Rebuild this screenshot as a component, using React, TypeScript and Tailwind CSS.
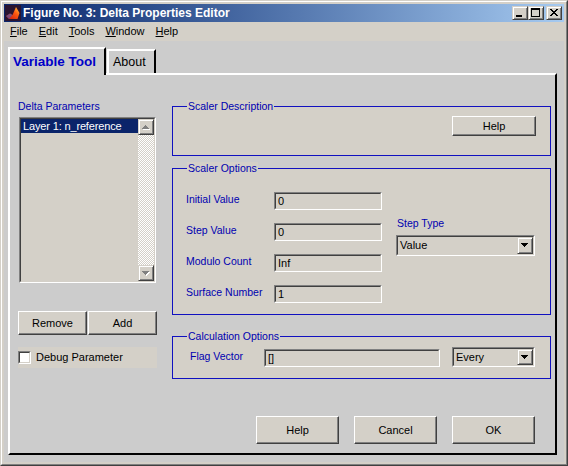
import React from "react";

function UpArrow({ disabled = true }: { disabled?: boolean }) {
  return (
    <svg width="8" height="5" viewBox="0 0 8 5" shapeRendering="crispEdges">
      {disabled && (
        <path d="M4 1h1v1h-1z M3 2h3v1h-3z M2 3h5v1h-5z M1 4h7v1h-7z" fill="#ffffff" />
      )}
      <path d="M3 0h1v1h-1z M2 1h3v1h-3z M1 2h5v1h-5z M0 3h7v1h-7z" fill={disabled ? "#808080" : "#000000"} />
    </svg>
  );
}

function DownArrow({ disabled = false }: { disabled?: boolean }) {
  return (
    <svg width="8" height="5" viewBox="0 0 8 5" shapeRendering="crispEdges">
      {disabled && (
        <path d="M1 1h7v1h-7z M2 2h5v1h-5z M3 3h3v1h-3z M4 4h1v1h-1z" fill="#ffffff" />
      )}
      <path d="M0 0h7v1h-7z M1 1h5v1h-5z M2 2h3v1h-3z M3 3h1v1h-1z" fill={disabled ? "#808080" : "#000000"} />
    </svg>
  );
}

function SmallRaised({ className, children }: { className: string; children?: React.ReactNode }) {
  return (
    <div
      className={`flex items-center justify-center border border-t-[#d4d0c8] border-l-[#d4d0c8] border-r-[#404040] border-b-[#404040] bg-[#d4d0c8] shadow-[inset_1px_1px_#ffffff,inset_-1px_-1px_#808080] ${className}`}
    >
      {children}
    </div>
  );
}

function Btn({ label, className }: { label: string; className: string }) {
  return (
    <div
      className={`flex items-center justify-center border border-t-white border-l-white border-r-[#404040] border-b-[#404040] bg-[#d4d0c8] shadow-[inset_-1px_-1px_#808080] text-[11px] leading-none text-black ${className}`}
    >
      {label}
    </div>
  );
}

function Field({ value, className }: { value: string; className: string }) {
  return (
    <div className={`border border-t-[#808080] border-l-[#808080] border-r-white border-b-white ${className}`}>
      <div className="h-full flex items-center border border-t-[#404040] border-l-[#404040] border-r-[#d4d0c8] border-b-[#d4d0c8] bg-[#d4d0c8] pl-[2px] text-[11px] leading-none text-black">
        {value}
      </div>
    </div>
  );
}

function Dropdown({ value, className }: { value: string; className: string }) {
  return (
    <div className={`border border-t-[#808080] border-l-[#808080] border-r-white border-b-white ${className}`}>
      <div className="h-full flex items-stretch border border-t-[#404040] border-l-[#404040] border-r-[#d4d0c8] border-b-[#d4d0c8] bg-[#d4d0c8]">
        <span className="flex-1 flex items-center pl-[2px] text-[11px] leading-none text-black">{value}</span>
        <SmallRaised className="w-[16px]">
          <DownArrow />
        </SmallRaised>
      </div>
    </div>
  );
}

function Frame({ title, className, children }: { title: string; className: string; children?: React.ReactNode }) {
  return (
    <div className={`relative border border-[#1010c0] bg-[#d4d0c8] ${className}`}>
      <span className="absolute left-[14px] top-[-7px] bg-[#d4d0c8] px-[1px] text-[10.5px] leading-[13px] text-[#0000b0] whitespace-nowrap">
        {title}
      </span>
      {children}
    </div>
  );
}

function Label({ text, className = "" }: { text: string; className?: string }) {
  return (
    <span className={`text-[10.5px] leading-[13px] text-[#0000b0] whitespace-nowrap ${className}`}>{text}</span>
  );
}

function TitleBtn({ kind, className = "" }: { kind: "min" | "max" | "close"; className?: string }) {
  return (
    <div
      className={`w-[16px] h-[14px] flex items-center justify-center border border-t-[#d4d0c8] border-l-[#d4d0c8] border-r-[#404040] border-b-[#404040] bg-[#d4d0c8] shadow-[inset_1px_1px_#ffffff,inset_-1px_-1px_#808080] ${className}`}
    >
      <svg width="14" height="12" viewBox="0 0 14 12" shapeRendering="crispEdges">
        {kind === "min" && <rect x="3" y="8" width="6" height="2" fill="#000" />}
        {kind === "max" && (
          <path d="M2 1h9v9h-9z M3 3v6h7v-6z" fill="#000" fillRule="evenodd" />
        )}
        {kind === "close" && (
          <path
            d="M3 2h2v1h1v1h2v-1h1v-1h2v1h-1v1h-1v1h-1v1h1v1h1v1h1v1h-2v-1h-1v-1h-2v1h-1v1h-2v-1h1v-1h1v-1h1v-1h-1v-1h-1v-1h-1z"
            fill="#000"
          />
        )}
      </svg>
    </div>
  );
}

function MatlabIcon() {
  return (
    <svg width="16" height="16" viewBox="0 0 16 16">
      <defs>
        <linearGradient id="mg" x1="0" y1="1" x2="1" y2="0">
          <stop offset="0" stopColor="#c01010" />
          <stop offset="0.6" stopColor="#ff5a10" />
          <stop offset="1" stopColor="#ffd040" />
        </linearGradient>
      </defs>
      <rect width="16" height="16" fill="#2a1430" />
      <path d="M1 11 L5 8.5 L7.5 10 L11 2 L14.5 8 L12.5 14 L4 14 Z" fill="url(#mg)" />
      <path d="M1 11 L5 8.5 L7.5 10 L4 14 Z" fill="#4060c0" opacity="0.6" />
    </svg>
  );
}

export default function App() {
  return (
    <div className="w-[568px] h-[466px] border border-t-[#d4d0c8] border-l-[#d4d0c8] border-r-[#404040] border-b-[#404040] bg-[#d4d0c8] font-['Liberation_Sans',Arial,sans-serif] text-black select-none overflow-hidden">
      <div className="h-full flex flex-col border border-t-white border-l-white border-r-[#808080] border-b-[#808080] p-[2px]">
        {/* Title bar */}
        <div className="h-[18px] shrink-0 flex items-center bg-linear-to-r from-[#0a246a] to-[#a6caf0] pl-[1px] pr-[2px]">
          <MatlabIcon />
          <span className="ml-[2px] text-[12px] font-bold text-white leading-none whitespace-nowrap">
            Figure No. 3: Delta Properties Editor
          </span>
          <div className="ml-auto flex items-center">
            <TitleBtn kind="min" />
            <TitleBtn kind="max" />
            <TitleBtn kind="close" className="ml-[2px]" />
          </div>
        </div>

        {/* Menu bar */}
        <div className="h-[19px] shrink-0 flex items-center gap-[11px] pl-[6px] text-[11px] leading-none">
          <span><span className="underline">F</span>ile</span>
          <span><span className="underline">E</span>dit</span>
          <span><span className="underline">T</span>ools</span>
          <span><span className="underline">W</span>indow</span>
          <span><span className="underline">H</span>elp</span>
        </div>

        {/* Figure area */}
        <div className="flex-1 bg-[#cccccc] pl-[4px] pt-[6px]">
          {/* Tabs */}
          <div className="h-[26px] flex items-end">
            <div className="relative z-10 -mb-[2px] w-[98px] h-[28px] flex items-center pl-[3px] pb-[1px] bg-[#cccccc] border-t-2 border-l-2 border-r-2 border-t-white border-l-white border-r-black text-[13.5px] font-bold text-[#0000c8] leading-none whitespace-nowrap">
              Variable Tool
            </div>
            <div className="ml-[1px] w-[49px] h-[24px] flex items-center pl-[4px] pt-[1px] border-t-2 border-l-2 border-r-2 border-t-white border-l-white border-r-black text-[12.5px] leading-none text-black">
              About
            </div>
          </div>

          {/* Panel */}
          <div className="w-[549px] h-[382px] border-2 border-t-white border-l-white border-r-black border-b-black flex">
            {/* Left column */}
            <div className="ml-[8px] mt-[25px] w-[139px] flex flex-col">
              <Label text="Delta Parameters" className="h-[13px]" />
              <div className="mt-[4px] ml-[1px] w-[137px] h-[166px] border border-t-[#808080] border-l-[#808080] border-r-white border-b-white">
                <div className="h-full flex border border-t-[#404040] border-l-[#404040] border-r-[#d4d0c8] border-b-[#d4d0c8] bg-[#d4d0c8]">
                  <div className="flex-1">
                    <div className="h-[14px] bg-[#0a246a] text-white text-[11px] leading-[14px] pl-[2px] tracking-[-0.15px] whitespace-nowrap">
                      Layer 1: n_reference
                    </div>
                  </div>
                  <div className="w-[16px] flex flex-col">
                    <SmallRaised className="h-[16px]">
                      <UpArrow />
                    </SmallRaised>
                    <div className="flex-1 [background-image:repeating-conic-gradient(#ffffff_0_25%,#d4d0c8_0_50%)] [background-size:2px_2px]" />
                    <SmallRaised className="h-[16px]">
                      <DownArrow disabled />
                    </SmallRaised>
                  </div>
                </div>
              </div>
              <div className="mt-[28px] h-[24px] flex gap-[1px]">
                <Btn label="Remove" className="w-[69px] h-[24px]" />
                <Btn label="Add" className="w-[69px] h-[24px]" />
              </div>
              <div className="mt-[12px] h-[21px] bg-[#d4d0c8] flex items-center">
                <div className="w-[13px] h-[13px] border border-t-[#808080] border-l-[#808080] border-r-white border-b-white">
                  <div className="h-full border border-t-[#404040] border-l-[#404040] border-r-[#d4d0c8] border-b-[#d4d0c8] bg-white" />
                </div>
                <span className="ml-[5px] text-[11px] leading-none text-black">Debug Parameter</span>
              </div>
            </div>

            {/* Right column */}
            <div className="ml-[15px] mt-[31px] w-[379px] flex flex-col">
              <Frame title="Scaler Description" className="h-[50px]">
                <div className="flex justify-end pt-[9px] pr-[14px]">
                  <Btn label="Help" className="w-[84px] h-[20px]" />
                </div>
              </Frame>

              <Frame title="Scaler Options" className="mt-[12px] h-[147px]">
                <div className="flex pl-[13px]">
                  <div className="grid grid-cols-[88px_108px] gap-y-[13px] pt-[23px]">
                    <Label text="Initial Value" className="self-center pb-[3px]" />
                    <Field value="0" className="h-[18px]" />
                    <Label text="Step Value" className="self-center pb-[3px]" />
                    <Field value="0" className="h-[18px]" />
                    <Label text="Modulo Count" className="self-center pb-[3px]" />
                    <Field value="Inf" className="h-[18px]" />
                    <Label text="Surface Number" className="self-center pb-[3px]" />
                    <Field value="1" className="h-[18px]" />
                  </div>
                  <div className="ml-[14px] pt-[48px] flex flex-col">
                    <Label text="Step Type" className="h-[13px] pl-[1px]" />
                    <Dropdown value="Value" className="mt-[5px] w-[139px] h-[21px]" />
                  </div>
                </div>
              </Frame>

              <Frame title="Calculation Options" className="mt-[21px] h-[43px]">
                <div className="flex items-start pt-[10px] pl-[17px]">
                  <Label text="Flag Vector" className="w-[74px] mt-[3px]" />
                  <Field value="[]" className="mt-[2px] w-[176px] h-[18px]" />
                  <Dropdown value="Every" className="ml-[12px] w-[83px] h-[20px]" />
                </div>
              </Frame>

              <div className="mt-[37px] h-[28px] flex justify-end gap-[15px] pr-[16px]">
                <Btn label="Help" className="w-[83px] h-[28px]" />
                <Btn label="Cancel" className="w-[83px] h-[28px]" />
                <Btn label="OK" className="w-[83px] h-[28px]" />
              </div>
            </div>
          </div>
        </div>
      </div>
    </div>
  );
}
